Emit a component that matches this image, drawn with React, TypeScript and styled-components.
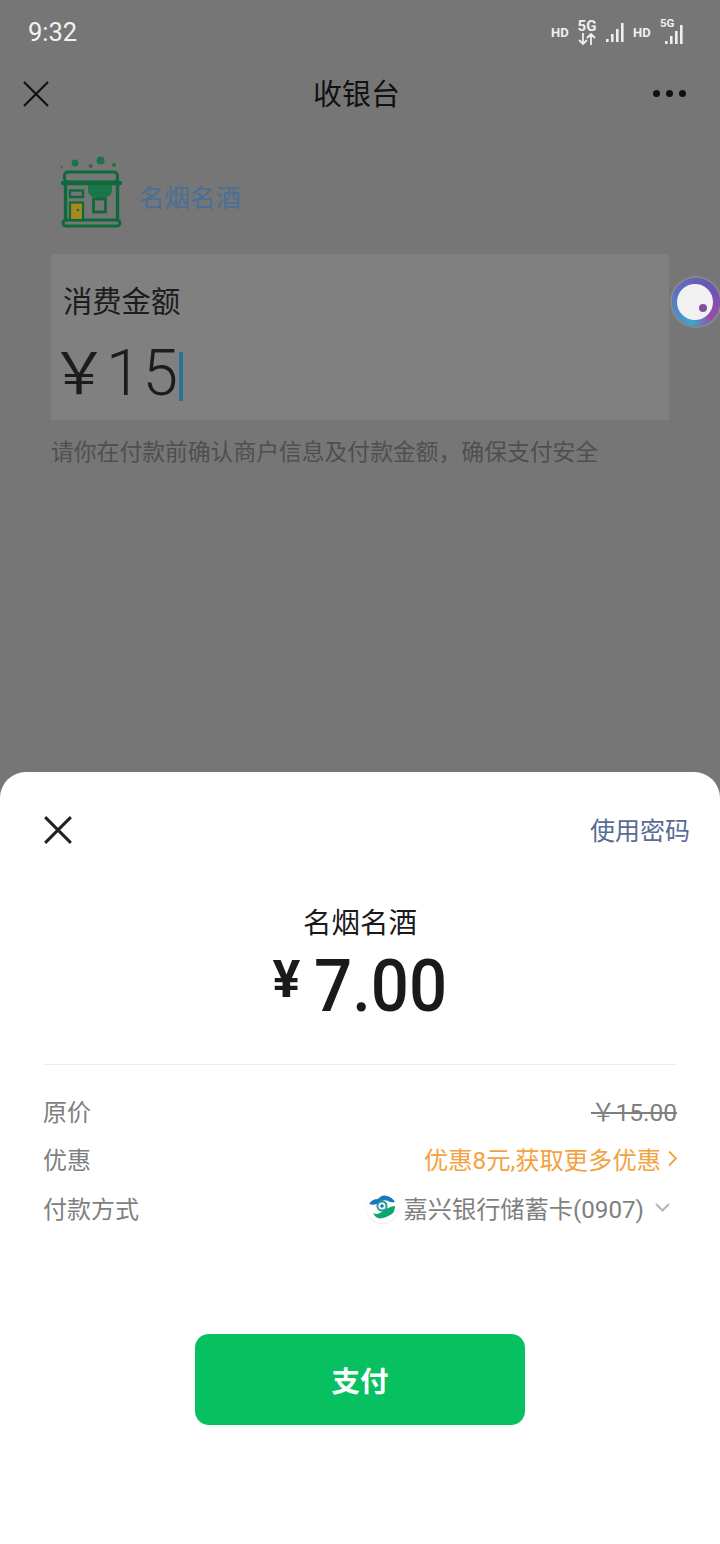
import React from 'react';
import styled, { createGlobalStyle } from 'styled-components';

const GlobalStyle = createGlobalStyle`
  html, body {
    margin: 0;
    padding: 0;
    background: #ffffff;
  }
  body {
    font-family: "Roboto", "Noto Sans CJK SC", sans-serif;
  }
`;

const Screen = styled.div`
  width: 720px;
  height: 1544px;
  display: flex;
  flex-direction: column;
  overflow: hidden;
  background: #767676;
`;

const Backdrop = styled.div`
  height: 772px;
  flex: none;
  position: relative;
  background: #767676;
`;

const StatusBar = styled.div`
  height: 64px;
  display: flex;
  align-items: center;
  justify-content: space-between;
  padding: 0 35px 0 28px;
`;

const Time = styled.span`
  font-size: 25.5px;
  color: #f2f2f2;
`;

const StatusIcons = styled.div`
  display: flex;
  align-items: center;
  height: 30px;
`;

const Hd = styled.span`
  width: 18px;
  font-size: 13px;
  font-weight: 700;
  color: #efefef;
  margin-right: 9px;
`;

const NetStack = styled.div`
  width: 18px;
  display: flex;
  flex-direction: column;
  align-items: center;
  margin-right: 10px;
`;

const NetLabel = styled.span`
  font-size: 15px;
  line-height: 13px;
  font-weight: 700;
  color: #efefef;
`;

const SignalSlot = styled.div`
  display: flex;
  margin-right: 7px;
`;

const CombinedSignal = styled.div`
  width: 25px;
  height: 24px;
  display: flex;
  justify-content: flex-end;
  align-items: flex-end;
  position: relative;
`;

const CombinedLabel = styled.span`
  position: absolute;
  left: 0;
  top: -3px;
  font-size: 11.5px;
  line-height: 12px;
  font-weight: 700;
  color: #efefef;
`;

const NavBar = styled.div`
  height: 60px;
  display: flex;
  align-items: center;
  justify-content: space-between;
  padding: 0 34px 0 22px;
  position: relative;
`;

const NavTitle = styled.h1`
  margin: 0 0 4px;
  position: absolute;
  left: 0;
  right: 7px;
  text-align: center;
  font-size: 29px;
  font-weight: 400;
  color: #111111;
`;

const Dots = styled.div`
  display: flex;
  gap: 6px;
  margin-bottom: 2px;
`;

const Dot = styled.span`
  width: 7px;
  height: 7px;
  border-radius: 50%;
  background: #111111;
`;

const Merchant = styled.div`
  display: flex;
  align-items: center;
  gap: 13px;
  margin-top: 32px;
  padding-left: 58px;
`;

const MerchantName = styled.span`
  margin-top: 4px;
  font-size: 25.5px;
  color: #4a6f96;
`;

const AmountCard = styled.div`
  width: 618px;
  height: 166px;
  margin: 24px 0 0 51px;
  box-sizing: border-box;
  padding: 30px 0 0 12px;
  background: #808080;
`;

const AmountLabel = styled.div`
  font-size: 29.3px;
  line-height: 36px;
  color: #1c1c1c;
`;

const AmountRow = styled.div`
  display: flex;
  align-items: center;
  margin-top: 21px;
  font-size: 64px;
  line-height: 66px;
  color: #1c1c1c;
`;

const AmountCurrency = styled.span`
  font-size: 58px;
  width: 56px;
  margin-left: -13px;
`;

const AmountValue = styled.span`
  letter-spacing: 1px;
  font-weight: 300;
`;

const Caret = styled.span`
  width: 4px;
  height: 49px;
  margin-top: 4px;
  background: #2a7393;
`;

const Notice = styled.p`
  margin: 17px 0 0 51px;
  font-size: 22.8px;
  line-height: 32px;
  color: #4f4f4f;
`;

const FloatBall = styled.div`
  position: absolute;
  left: 672px;
  top: 278px;
  width: 48px;
  height: 48px;
  border-radius: 50%;
  box-shadow: 0 0 0 2px rgba(150, 150, 170, 0.55);
  background: conic-gradient(from 190deg, #3ba6cf, #5c6fc0 30%, #6a55b5 60%, #9a4aa8 85%, #3ba6cf);
`;

const FloatFace = styled.div`
  position: absolute;
  left: 5px;
  top: 6px;
  width: 36px;
  height: 36px;
  border-radius: 50%;
  background: #f1f1f1;
`;

const FloatPupil = styled.div`
  position: absolute;
  left: 27px;
  top: 26px;
  width: 8px;
  height: 8px;
  border-radius: 50%;
  background: #80509a;
`;

const Sheet = styled.div`
  flex: 1;
  display: flex;
  flex-direction: column;
  align-items: stretch;
  background: #ffffff;
  border-radius: 26px 26px 0 0;
`;

const SheetHeader = styled.div`
  display: flex;
  align-items: center;
  justify-content: space-between;
  padding: 40px 30px 0 43px;
  height: 76px;
  box-sizing: border-box;
`;

const PasswordLink = styled.span`
  margin-bottom: 2px;
  font-size: 25px;
  color: #576b95;
`;

const Payee = styled.div`
  margin-top: 56px;
  text-align: center;
  font-size: 28.5px;
  line-height: 40px;
  color: #1a1a1a;
`;

const Price = styled.div`
  display: flex;
  align-items: flex-start;
  justify-content: center;
  margin-top: 4px;
  height: 76px;
  color: #1a1a1a;
  font-weight: 500;
`;

const PriceCurrency = styled.span`
  font-size: 52px;
  line-height: 52px;
  font-weight: 700;
  margin: 6px 14px 0 0;
`;

const PriceValue = styled.span`
  display: inline-block;
  font-size: 73px;
  line-height: 76px;
  transform: scaleX(0.92);
  transform-origin: left center;
  margin-right: -11.6px;
`;

const Divider = styled.div`
  margin: 40px 43px 0;
  height: 1px;
  background: #ededed;
`;

const Rows = styled.div`
  display: flex;
  flex-direction: column;
  padding: 21px 43px 0;
`;

const Row = styled.div`
  display: flex;
  align-items: center;
  justify-content: space-between;
  height: 48.5px;
  font-size: 24px;
`;

const RowLabel = styled.span`
  color: #7f7f7f;
`;

const OldPrice = styled.span`
  color: #7f7f7f;
  text-decoration: line-through;
  font-size: 24.5px;
`;

const Promo = styled.span`
  display: flex;
  align-items: center;
  gap: 7px;
  font-size: 24.3px;
  color: #f3a240;
`;

const PayMethod = styled.span`
  display: flex;
  align-items: center;
  font-size: 24.2px;
  color: #7f7f7f;
`;

const BankBadge = styled.span`
  display: flex;
  width: 32px;
  height: 32px;
  margin-right: 6px;
  border-radius: 50%;
  box-shadow: 0 1px 2px rgba(0, 0, 0, 0.1);
`;

const ChevronSlot = styled.span`
  display: flex;
  margin: 0 7px 0 11px;
`;

const PayButton = styled.button`
  align-self: center;
  width: 330px;
  height: 91px;
  margin-top: 102px;
  border: none;
  border-radius: 14px;
  background: #07c160;
  color: #ffffff;
  font-family: inherit;
  font-size: 28.5px;
  font-weight: 700;
`;

const CloseIcon = ({ size, color, weight }: { size: number; color: string; weight: number }) => (
  <svg width={size} height={size} viewBox="0 0 28 28" fill="none" stroke={color} strokeWidth={weight}>
    <path d="M2 2 L26 26 M26 2 L2 26" />
  </svg>
);

const SignalBars = () => (
  <svg width="20" height="20" viewBox="0 0 20 20" fill="#efefef">
    <rect x="0" y="17" width="2.6" height="3" />
    <rect x="5" y="12" width="2.6" height="8" />
    <rect x="10" y="7" width="2.6" height="13" />
    <rect x="15" y="1" width="2.6" height="19" />
  </svg>
);

const Arrows = () => (
  <svg width="18" height="12" viewBox="0 0 18 12" fill="none" stroke="#efefef" strokeWidth="1.8">
    <path d="M5 0 V11 M1 7 L5 11 L9 7 M13 12 V1 M9 5 L13 1 L17 5" />
  </svg>
);

const ShopLogo = () => (
  <svg width="68" height="74" viewBox="58 156 68 74" fill="none" stroke="#0f6a3b" strokeLinecap="round">
    <g stroke="none" fill="#1a7548">
      <circle cx="75" cy="163" r="3.4" />
      <circle cx="100.6" cy="160.6" r="4" />
      <circle cx="90.6" cy="166" r="2" fill="#3f5f50" />
      <circle cx="114" cy="165" r="2" />
      <circle cx="61.6" cy="167" r="1" fill="#3f5f50" />
    </g>
    <rect x="64.5" y="172" width="53" height="10" rx="3.5" strokeWidth="3" />
    <path d="M63 183 H120" strokeWidth="4.5" />
    <path d="M65.5 184 V220 M117.5 184 V220" strokeWidth="3.4" />
    <rect x="63" y="220" width="57" height="6" rx="3" strokeWidth="3" />
    <path d="M88 185 H112 V190 Q112 198 100 198 Q88 198 88 190 Z" fill="#1a7548" stroke="none" />
    <rect x="93.5" y="199" width="12" height="13" strokeWidth="2.8" strokeLinecap="butt" />
    <rect x="70" y="190.5" width="13" height="6.5" strokeWidth="2.4" strokeLinecap="butt" />
    <rect x="70" y="202.5" width="13" height="17.5" fill="#a88a1c" strokeWidth="2.2" strokeLinecap="butt" />
    <circle cx="78" cy="210" r="1.2" fill="#0f6a3b" stroke="none" />
  </svg>
);

const BankLogo = () => (
  <svg width="32" height="32" viewBox="0 0 32 32">
    <path d="M3 13 Q6 8 12 8 Q16 3 21 5 Q26 6 29 11 Q25 12 22 10 Q18 8 14 11 Q10 15 3 13 Z" fill="#1b75bb" />
    <path d="M7 22 Q10 24 14 22 Q18 19 22 17 Q26 15 29 15 Q29 20 26 23 Q21 26 17 27 Q10 29 7 22 Z" fill="#0fa56f" />
    <circle cx="16" cy="15" r="4.6" fill="#ffffff" stroke="#1aa09a" strokeWidth="2" />
    <circle cx="16" cy="15" r="1.8" fill="#1b75bb" />
  </svg>
);

const ChevronRight = () => (
  <svg width="9" height="17" viewBox="0 0 9 17" fill="none" stroke="#f3a240" strokeWidth="1.8">
    <path d="M1 1.5 L8 8.5 L1 15.5" />
  </svg>
);

const ChevronDown = () => (
  <svg width="15" height="9" viewBox="0 0 15 9" fill="none" stroke="#b5b5b5" strokeWidth="2">
    <path d="M1 1 L7.5 7.5 L14 1" />
  </svg>
);

const App: React.FC = () => (
  <Screen>
    <GlobalStyle />
    <Backdrop>
      <StatusBar>
        <Time>9:32</Time>
        <StatusIcons>
          <Hd>HD</Hd>
          <NetStack>
            <NetLabel>5G</NetLabel>
            <Arrows />
          </NetStack>
          <SignalSlot>
            <SignalBars />
          </SignalSlot>
          <Hd>HD</Hd>
          <CombinedSignal>
            <CombinedLabel>5G</CombinedLabel>
            <SignalBars />
          </CombinedSignal>
        </StatusIcons>
      </StatusBar>
      <NavBar>
        <CloseIcon size={28} color="#111111" weight={2.2} />
        <NavTitle>收银台</NavTitle>
        <Dots>
          <Dot />
          <Dot />
          <Dot />
        </Dots>
      </NavBar>
      <Merchant>
        <ShopLogo />
        <MerchantName>名烟名酒</MerchantName>
      </Merchant>
      <AmountCard>
        <AmountLabel>消费金额</AmountLabel>
        <AmountRow>
          <AmountCurrency>￥</AmountCurrency>
          <AmountValue>15</AmountValue>
          <Caret />
        </AmountRow>
      </AmountCard>
      <Notice>请你在付款前确认商户信息及付款金额，确保支付安全</Notice>
      <FloatBall>
        <FloatFace />
        <FloatPupil />
      </FloatBall>
    </Backdrop>
    <Sheet>
      <SheetHeader>
        <CloseIcon size={30} color="#222222" weight={2.8} />
        <PasswordLink>使用密码</PasswordLink>
      </SheetHeader>
      <Payee>名烟名酒</Payee>
      <Price>
        <PriceCurrency>¥</PriceCurrency>
        <PriceValue>7.00</PriceValue>
      </Price>
      <Divider />
      <Rows>
        <Row>
          <RowLabel>原价</RowLabel>
          <OldPrice>￥15.00</OldPrice>
        </Row>
        <Row>
          <RowLabel>优惠</RowLabel>
          <Promo>
            优惠8元,获取更多优惠
            <ChevronRight />
          </Promo>
        </Row>
        <Row>
          <RowLabel>付款方式</RowLabel>
          <PayMethod>
            <BankBadge>
              <BankLogo />
            </BankBadge>
            嘉兴银行储蓄卡(0907)
            <ChevronSlot>
              <ChevronDown />
            </ChevronSlot>
          </PayMethod>
        </Row>
      </Rows>
      <PayButton>支付</PayButton>
    </Sheet>
  </Screen>
);

export default App;
